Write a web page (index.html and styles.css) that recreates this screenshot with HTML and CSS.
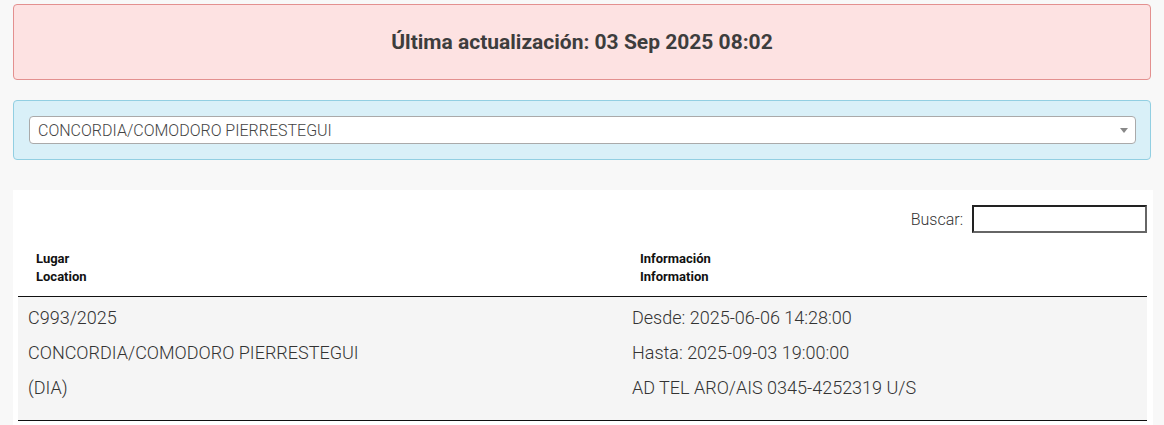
FILE: index.html
```html
<!DOCTYPE html>
<html lang="es">
<head>
  <meta charset="UTF-8" />
  <meta name="viewport" content="width=device-width, initial-scale=1.0"/>
  <title>NOTAM</title>
  <link rel="stylesheet" href="styles.css">
</head>
<body>

  <div class="alert-update">
    <h3>Última actualización: 03 Sep 2025 08:02</h3>
  </div>

  <div class="alert-info">
    <div class="select-box">
      <span class="select-text">CONCORDIA/COMODORO PIERRESTEGUI</span>
      <span class="select-arrow"></span>
    </div>
  </div>

  <div class="panel">
    <div class="table-filter">
      <label for="buscar">Buscar:</label>
      <input type="search" id="buscar" />
    </div>

    <table class="notam-table">
      <thead>
        <tr>
          <th class="col-lugar">Lugar<br>Location</th>
          <th>Información<br>Information</th>
        </tr>
      </thead>
      <tbody>
        <tr>
          <td class="col-lugar">
            <p>C993/2025</p>
            <p>CONCORDIA/COMODORO PIERRESTEGUI</p>
            <p>(DIA)</p>
          </td>
          <td>
            <p>Desde: 2025-06-06 14:28:00</p>
            <p>Hasta: 2025-09-03 19:00:00</p>
            <p>AD TEL ARO/AIS 0345-4252319 U/S</p>
          </td>
        </tr>
      </tbody>
    </table>
  </div>

</body>
</html>
```

FILE: styles.css
```css
body {
  font-family: 'Roboto', sans-serif;
  font-weight: 300;
  background-color: #f8f8f8;
  color: #333;
  margin: 0;
  padding: 4px 13px 0 13px;
}

.alert-update {
  background-color: #fde2e2;
  border: 1px solid #e3908f;
  border-radius: 4px;
  height: 74px;
  display: flex;
  align-items: center;
  justify-content: center;
}

.alert-update h3 {
  margin: 0;
  font-size: 21px;
  font-weight: 700;
  color: #3d3d3d;
}

.alert-info {
  margin-top: 20px;
  background-color: #d9f0f8;
  border: 1px solid #92cfe2;
  border-radius: 4px;
  padding: 15px 14px 15px 15px;
}

.select-box {
  position: relative;
  background-color: #fff;
  border: 1px solid #aaa;
  border-radius: 4px;
  height: 26px;
  display: flex;
  align-items: center;
  padding-left: 8px;
}

.select-text {
  font-size: 16px;
  color: #444;
}

.select-arrow {
  position: absolute;
  right: 7px;
  top: 11px;
  border-left: 4px solid transparent;
  border-right: 4px solid transparent;
  border-top: 5px solid #888;
}

.panel {
  margin-top: 30px;
  margin-right: -2px;
  background-color: #fff;
  padding: 15px 6px 0 5px;
  min-height: 240px;
}

.table-filter {
  display: flex;
  justify-content: flex-end;
  align-items: center;
  gap: 9px;
  font-size: 16px;
  color: #333;
}

.table-filter input {
  box-sizing: border-box;
  width: 175px;
  height: 28px;
  margin: 0;
  padding: 0;
  border: 2px solid #222;
  border-color: #222 #666 #666 #222;
  font-family: inherit;
}

.notam-table {
  width: 100%;
  border-collapse: collapse;
  margin-top: 7px;
}

.notam-table th {
  text-align: left;
  font-size: 13px;
  font-weight: 700;
  line-height: 18px;
  color: #111;
  padding: 10px 18px;
  border-bottom: 1px solid #111;
}

.notam-table th.col-lugar,
.notam-table td.col-lugar {
  width: 53.5%;
}

.notam-table td {
  vertical-align: top;
  background-color: #f5f5f5;
  padding: 8px 10px 10px 10px;
  font-size: 18px;
  color: #333;
  border-bottom: 1px solid #111;
}

.notam-table td p {
  margin: 0 0 10px 0;
  line-height: 25px;
}
```
